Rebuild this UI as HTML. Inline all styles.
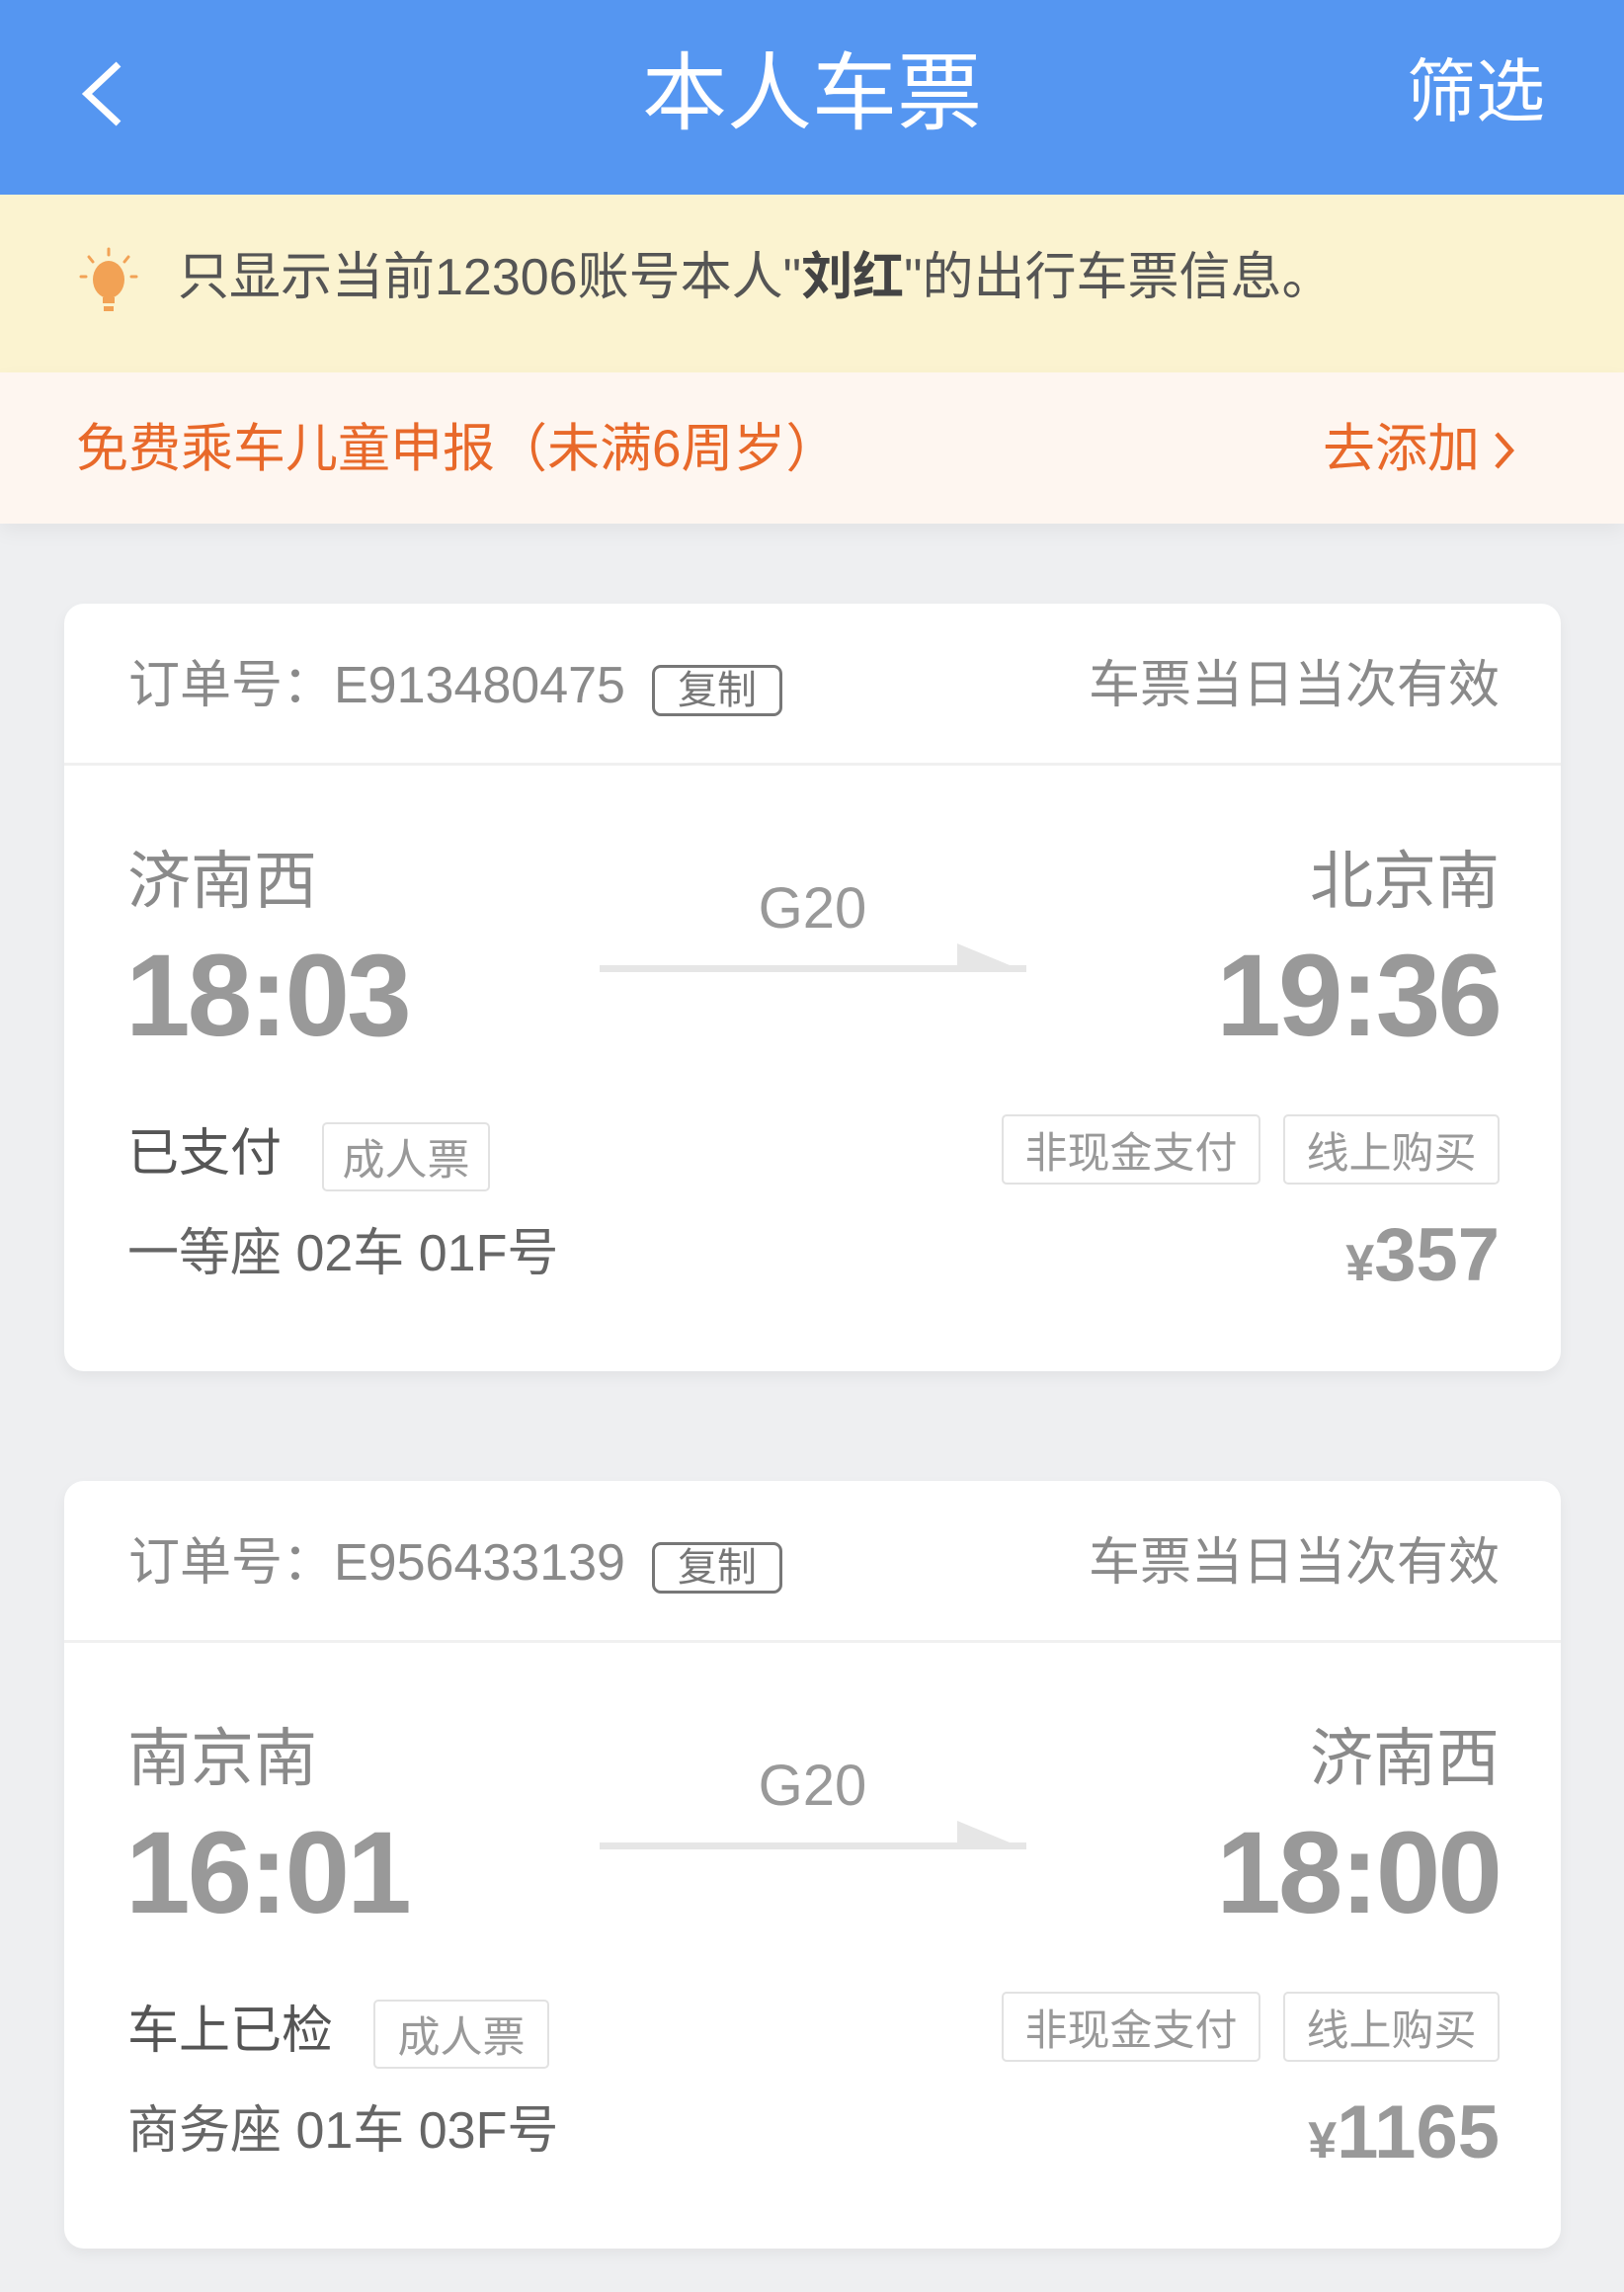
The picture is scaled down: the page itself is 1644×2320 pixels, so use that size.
<!DOCTYPE html>
<html><head><meta charset="utf-8"><style>
*{margin:0;padding:0;box-sizing:border-box}
body{width:1644px;height:2320px;background:#eeeff1;font-family:"Liberation Sans","Noto Sans CJK SC",sans-serif;position:relative;overflow:hidden}
.a{position:absolute;white-space:nowrap;line-height:1}
.hdr{position:absolute;left:0;top:0;width:1644px;height:197px;background:#5596f1}
.tip{position:absolute;left:0;top:197px;width:1644px;height:180px;background:#fbf3d0}
.kid{position:absolute;left:0;top:377px;width:1644px;height:153px;background:#fef6f0;box-shadow:0 8px 20px rgba(0,0,0,0.05)}
.card{position:absolute;left:65px;width:1515px;height:777px;background:#fff;border-radius:20px;box-shadow:0 6px 14px rgba(0,0,0,0.05)}
.card .div{position:absolute;left:0;top:161px;width:100%;height:3px;background:#f0f0f0}
.g{color:#8a8a8a}
.tag{position:absolute;border:2px solid #e2e2e2;border-radius:5px;color:#999;font-size:43px;display:flex;align-items:center;justify-content:center}
.time{font-size:118px;font-weight:bold;color:#999;letter-spacing:-3px}
.st{font-size:64px;color:#8a8a8a}
</style></head><body>
<div class="hdr"></div>
<svg class="a" style="left:78px;top:60px" width="50" height="70" viewBox="0 0 50 70"><path d="M42 5 L10 35 L42 65" stroke="#fff" stroke-width="7" fill="none"/></svg>
<div class="a" style="left:0;width:1644px;text-align:center;top:52px;font-size:86px;color:#fff">本人车票</div>
<div class="a" style="left:1424px;top:58px;font-size:70px;color:#fff">筛选</div>
<div class="tip"></div>
<svg class="a" style="left:76px;top:250px" width="68" height="72" viewBox="0 0 68 72">
<g stroke="#f2a255" stroke-width="3" stroke-linecap="round"><line x1="34" y1="2" x2="34" y2="8"/><line x1="14" y1="10" x2="18" y2="15"/><line x1="54" y1="10" x2="50" y2="15"/><line x1="6" y1="30" x2="11" y2="30"/><line x1="62" y1="30" x2="57" y2="30"/></g>
<ellipse cx="34" cy="33" rx="16" ry="19" fill="#f2a255"/>
<rect x="28" y="51" width="12" height="6" fill="#f2a255"/><rect x="29" y="60" width="10" height="5" fill="#f2a255"/></svg>
<div class="a" style="left:180px;top:255px;font-size:52px;color:#555">只显示当前12306账号本人"<b style="color:#444">刘红</b>"的出行车票信息。</div>
<div class="kid"></div>
<div class="a" style="left:77px;top:428px;font-size:53px;color:#e8692a">免费乘车儿童申报（未满6周岁）</div>
<div class="a" style="left:1339px;top:428px;font-size:53px;color:#e8692a">去添加</div>
<svg class="a" style="left:1510px;top:435px" width="26" height="42" viewBox="0 0 26 42"><path d="M5 4 L20 21 L5 38" stroke="#e8692a" stroke-width="4.5" fill="none"/></svg>

<!-- card 1 -->
<div class="card" style="top:611px">
<div class="div"></div>
<div class="a g" style="left:65px;top:57px;font-size:52px">订单号：E913480475</div>
<div class="a" style="left:595px;top:62px;width:132px;height:52px;border:3px solid #777;border-radius:9px;color:#777;font-size:40px;text-align:center;line-height:46px">复制</div>
<div class="a g" style="right:62px;top:57px;font-size:52px">车票当日当次有效</div>
<div class="a st" style="left:64px;top:249px">济南西</div>
<div class="a st" style="right:62px;top:249px">北京南</div>
<div class="a" style="left:0;width:1515px;text-align:center;top:280px;font-size:58px;color:#999">G20</div>
<svg class="a" style="left:542px;top:340px" width="432" height="40" viewBox="0 0 432 40"><rect x="0" y="26" width="432" height="7" fill="#e6e6e6"/><path d="M362 4 L432 33 L362 33 Z" fill="#e6e6e6"/></svg>
<div class="a time" style="left:62px;top:338px">18:03</div>
<div class="a time" style="right:62px;top:338px">19:36</div>
<div class="a" style="left:64px;top:531px;font-size:52px;color:#555">已支付</div>
<div class="tag" style="left:261px;top:525px;width:170px;height:70px">成人票</div>
<div class="tag" style="left:949px;top:517px;width:262px;height:71px">非现金支付</div>
<div class="tag" style="left:1234px;top:517px;width:219px;height:71px">线上购买</div>
<div class="a" style="left:64px;top:632px;font-size:52px;color:#666">一等座 02车 01F号</div>
<div class="a" style="right:62px;top:622px;font-size:76px;font-weight:bold;color:#999"><span style="font-size:52px">¥</span>357</div>
</div>

<!-- card 2 -->
<div class="card" style="top:1499px">
<div class="div"></div>
<div class="a g" style="left:65px;top:57px;font-size:52px">订单号：E956433139</div>
<div class="a" style="left:595px;top:62px;width:132px;height:52px;border:3px solid #777;border-radius:9px;color:#777;font-size:40px;text-align:center;line-height:46px">复制</div>
<div class="a g" style="right:62px;top:57px;font-size:52px">车票当日当次有效</div>
<div class="a st" style="left:64px;top:249px">南京南</div>
<div class="a st" style="right:62px;top:249px">济南西</div>
<div class="a" style="left:0;width:1515px;text-align:center;top:280px;font-size:58px;color:#999">G20</div>
<svg class="a" style="left:542px;top:340px" width="432" height="40" viewBox="0 0 432 40"><rect x="0" y="26" width="432" height="7" fill="#e6e6e6"/><path d="M362 4 L432 33 L362 33 Z" fill="#e6e6e6"/></svg>
<div class="a time" style="left:62px;top:338px">16:01</div>
<div class="a time" style="right:62px;top:338px">18:00</div>
<div class="a" style="left:64px;top:531px;font-size:52px;color:#555">车上已检</div>
<div class="tag" style="left:313px;top:525px;width:178px;height:70px">成人票</div>
<div class="tag" style="left:949px;top:517px;width:262px;height:71px">非现金支付</div>
<div class="tag" style="left:1234px;top:517px;width:219px;height:71px">线上购买</div>
<div class="a" style="left:64px;top:632px;font-size:52px;color:#666">商务座 01车 03F号</div>
<div class="a" style="right:62px;top:622px;font-size:76px;font-weight:bold;color:#999"><span style="font-size:52px">¥</span>1165</div>
</div>
</body></html>
